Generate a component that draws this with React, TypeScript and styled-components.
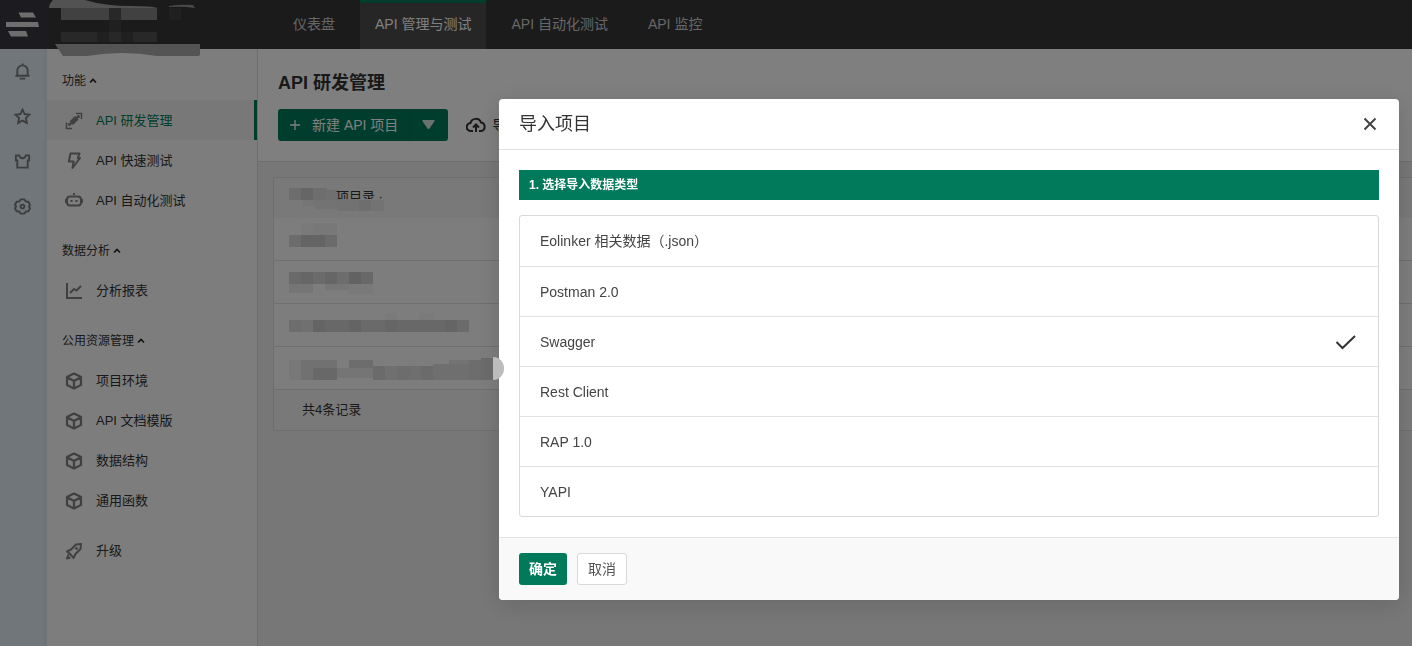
import React, { useState } from "react";
import styled, { createGlobalStyle, css } from "styled-components";

const GlobalStyle = createGlobalStyle`
  *, *::before, *::after { box-sizing: border-box; }
  body {
    margin: 0;
    background: #efefef;
    color: #333;
    font: 13px/20px "Liberation Sans", "Noto Sans CJK SC", sans-serif;
  }
  button { font: inherit; cursor: pointer; }
  a { color: inherit; text-decoration: none; }
`;

const Shell = styled.div`
  display: flex;
  flex-direction: column;
  min-height: 100vh;
  overflow: hidden;
`;

const TopBar = styled.header`
  display: flex;
  height: 49px;
  background: #363636;
`;

const LogoLink = styled.a`
  width: 47px;
  background: #38363f;
`;

const Workspace = styled.div`
  width: 231px;
`;

const Nav = styled.nav`
  display: flex;
  gap: 10px;
`;

const NavLink = styled.a<{ $active?: boolean }>`
  display: flex;
  align-items: center;
  padding: 0 15px 2px;
  border-top: 3px solid ${(p) => (p.$active ? "#007a5a" : "transparent")};
  border-bottom: 3px solid transparent;
  background: ${(p) => (p.$active ? "#4c4c4e" : "transparent")};
  color: ${(p) => (p.$active ? "#fff" : "#ccc")};
  font-size: 14px;
  white-space: nowrap;
`;

const Body = styled.div`
  display: flex;
  flex: 1;
`;

const Rail = styled.aside`
  display: flex;
  flex-direction: column;
  width: 47px;
  border-right: 3px solid #dde7ef;
  background: #e3edf5;
`;

const RailButton = styled.button`
  display: grid;
  place-items: center;
  height: 45px;
  padding: 0;
  border: 0;
  background: none;
  color: #7a7a7a;
`;

const Sidebar = styled.aside`
  width: 211px;
  padding-top: 11px;
  border-right: 1px solid #d9d9d9;
  background: #fafafa;
`;

const Group = styled.section`
  margin-bottom: 10px;
`;

const GroupButton = styled.button`
  display: flex;
  align-items: center;
  gap: 3px;
  width: 100%;
  height: 40px;
  padding: 2px 15px 0;
  border: 0;
  background: none;
  color: #333;
  font-size: 12px;
`;

const SideLink = styled.a<{ $active?: boolean }>`
  display: flex;
  align-items: center;
  gap: 10px;
  height: 40px;
  padding: 2px 12px 0 15px;
  border-right: 3px solid transparent;
  color: #333;
  ${(p) =>
    p.$active &&
    css`
      border-right-color: #007a5a;
      background: #f0f0f0;
      color: #007a5a;
    `}
`;

const SideIcon = styled.span`
  display: grid;
  place-items: center;
  width: 24px;
  color: #808080;
`;

const Main = styled.main`
  flex: 1;
  min-width: 0;
  background: #efefef;
`;

const PageHead = styled.div`
  padding: 20px;
  border-bottom: 1px solid #dedede;
  background: #fff;
`;

const PageTitle = styled.h1`
  margin: 0 0 12px;
  color: #333;
  font-size: 18px;
  line-height: 28px;
`;

const Actions = styled.div`
  display: flex;
  align-items: center;
  gap: 18px;
`;

const SplitButton = styled.div`
  display: flex;
  overflow: hidden;
  border-radius: 3px;
  background: #007a5a;
`;

const GreenButton = styled.button`
  display: flex;
  align-items: center;
  gap: 11px;
  height: 32px;
  padding: 0 11px;
  border: 0;
  background: none;
  color: #fff;
  font-size: 14px;
  white-space: nowrap;

  & + & {
    width: 39px;
    border-left: 1px solid #006e51;
  }
`;

const PlainButton = styled.button`
  display: flex;
  align-items: center;
  gap: 6px;
  padding: 0;
  border: 0;
  background: none;
  color: #333;
  font-size: 14px;
  white-space: nowrap;
`;

const TableCard = styled.div`
  margin: 15px 0 15px 15px;
  border: 1px solid #dedede;
  border-right: 0;
  border-radius: 3px 0 0 3px;
  background: #fafafa;
`;

const Table = styled.table`
  width: 100%;
  border-spacing: 0;

  th,
  td {
    padding: 0 15px;
    text-align: left;
    font-weight: 400;
    line-height: 0;
  }
  th {
    height: 40px;
    background: #f3f3f3;
  }
  tbody td {
    height: 43px;
    border-bottom: 1px solid #dedede;
  }
  tfoot td {
    height: 40px;
    padding-left: 28px;
    background: #f3f3f3;
    line-height: 20px;
  }
`;

const HeadLabel = styled.div`
  position: relative;
  height: 28px;
  padding-left: 47px;
  font-size: 13px;
  line-height: 26px;

  svg {
    position: absolute;
    left: 0;
    top: 0;
  }
`;

const TopSmudge = styled.svg`
  position: absolute;
  left: 47px;
  top: 0;
  z-index: 3;
`;

const Handle = styled.span`
  position: absolute;
  left: -6px;
  top: 258px;
  width: 11px;
  height: 23px;
  border-radius: 0 12px 12px 0;
  background: #bcbcbc;
`;

const Overlay = styled.div`
  position: fixed;
  inset: 0;
  z-index: 2;
  display: flex;
  align-items: flex-start;
  justify-content: flex-end;
  padding: 99px 13px 13px;
  background: rgba(0, 0, 0, 0.5);
`;

const Dialog = styled.form`
  position: relative;
  width: 100%;
  max-width: 900px;
  border-radius: 4px;
  background: #fff;
  box-shadow: 0 4px 24px rgba(0, 0, 0, 0.14);
`;

const DialogHead = styled.div`
  display: flex;
  align-items: center;
  justify-content: space-between;
  height: 51px;
  padding: 0 20px;
  border-bottom: 1px solid #e2e2e2;
`;

const DialogTitle = styled.h2`
  margin: 0;
  color: #333;
  font-size: 18px;
  font-weight: 400;
`;

const CloseButton = styled.button`
  display: flex;
  padding: 0;
  border: 0;
  background: none;
  color: #444;
`;

const DialogBody = styled.div`
  padding: 20px;
`;

const Step = styled.h3`
  margin: 0 0 15px;
  padding: 0 10px;
  background: #007a5a;
  color: #fff;
  font-size: 12px;
  line-height: 30px;
`;

const Options = styled.div`
  border: 1px solid #d9d9d9;
  border-radius: 3px;
`;

const Option = styled.label`
  display: flex;
  align-items: center;
  justify-content: space-between;
  height: 50px;
  padding: 0 20px;
  color: #444;
  font-size: 14px;
  cursor: pointer;

  & + & {
    border-top: 1px solid #e2e2e2;
  }
`;

const Radio = styled.input`
  appearance: none;
  width: 0;
  height: 0;
  margin: 0 auto 0 0;
`;

const DialogFoot = styled.div`
  display: flex;
  gap: 10px;
  padding: 15px 20px;
  border-top: 1px solid #e2e2e2;
  border-radius: 0 0 4px 4px;
  background: #f9f9f9;
`;

const FootButton = styled.button<{ $primary?: boolean }>`
  height: 32px;
  padding: 0 10px;
  border: ${(p) => (p.$primary ? "0" : "1px solid #d9d9d9")};
  border-radius: 3px;
  background: ${(p) => (p.$primary ? "#007a5a" : "#fff")};
  color: ${(p) => (p.$primary ? "#fff" : "#555")};
  font-size: 14px;
  font-weight: ${(p) => (p.$primary ? 700 : 400)};
`;

type IconProps = { size?: number; width?: number; children: React.ReactNode };

const Icon = ({ size = 18, width = 2, children }: IconProps) => (
  <svg
    width={size}
    height={size}
    viewBox="0 0 18 18"
    fill="none"
    stroke="currentColor"
    strokeWidth={width}
    aria-hidden="true"
  >
    {children}
  </svg>
);

const icons: Record<string, React.ReactNode> = {
  bell: <path d="M1.500 13.500h15M3.500 13.500V8a5.500 5.500 0 0 1 11 0v5.500M6 16.500h6M9 .500v2" />,
  star: <path d="m9 1.800 2.200 4.600 5.200.7-3.800 3.500 1 5.200L9 13.300l-4.600 2.500 1-5.200L1.600 7.100l5.200-.7z" />,
  shirt: <path d="M2 2.500h3.500q.5 3 3.500 3t3.500-3H16V8h-1.500v7.500h-11V8H2z" />,
  gear: (
    <>
      <path
        d="M7 1.500h4l1.500 2.200 2.700.3 1.800 3.200L15.800 9l1.200 1.800-1.800 3.200-2.700.3L11 16.500H7l-1.500-2.200-2.700-.3L1 10.800 2.200 9 1 7.200 2.800 4l2.700-.3z"
        strokeLinejoin="round"
      />
      <circle cx="9" cy="9" r="2" />
    </>
  ),
  plug: (
    <>
      <path d="m6.200 11.300 5.600-5.600" strokeWidth="5" />
      <path d="m11 6.500 3-3M7 10.500l-3 3" strokeWidth="2" />
      <path d="M11 1.500h5.500V7M14 3.800V6M1.500 10.500v6H7M4 11v2.500" strokeWidth="1.500" />
    </>
  ),
  bolt: <path d="M5.500 1.500h9L12.800 6H15l-7.500 10 1.200-6.500H3.800z" strokeLinejoin="round" />,
  robot: (
    <>
      <rect x="2" y="4.500" width="14" height="9" rx="3" />
      <path d="M9 1v2M0 7v4M18 7v4M6.500 8v2M11.500 8v2" />
    </>
  ),
  chart: <path d="M2 1v15h15M5 11l4-4 2.500 1.500L16 4" />,
  cube: <path d="m9 1.500 7 3.500v8l-7 3.500L2 13V5zM2.500 5.500 9 9l6.500-3.500M9 9v7" strokeWidth="2.200" strokeLinejoin="round" />,
  rocket: (
    <>
      <path
        d="M16 2 11 2.500 6 7.500 2 9.500l2.500 2 2 2L8.500 16l2-4L15.500 7zM3.500 12.500l-1.500 4 3.500-1"
        strokeLinejoin="round"
      />
      <circle cx="11.500" cy="6.500" r="1" fill="currentColor" strokeWidth="1" />
    </>
  ),
};

const Caret = () => (
  <svg width="8" height="6" viewBox="0 0 8 6" fill="none" stroke="#222" strokeWidth="1.600" aria-hidden="true">
    <path d="m1 4.500 3-3 3 3" />
  </svg>
);

const groups = [
  {
    name: "功能",
    items: [
      ["API 研发管理", "plug"],
      ["API 快速测试", "bolt"],
      ["API 自动化测试", "robot"],
    ],
  },
  { name: "数据分析", items: [["分析报表", "chart"]] },
  {
    name: "公用资源管理",
    items: [
      ["项目环境", "cube"],
      ["API 文档模版", "cube"],
      ["数据结构", "cube"],
      ["通用函数", "cube"],
    ],
  },
];

// Each block is x, y, width, height, darkness.
type Block = [number, number, number, number, number];

const headBlocks: Block[] = [
  [0, 4, 12, 12, 0.1], [12, 4, 12, 12, 0.16], [24, 4, 14, 12, 0.09], [38, 6, 12, 10, 0.07],
  [14, 16, 12, 6, 0.03], [26, 16, 22, 9, 0.05], [48, 15, 22, 12, 0.06], [70, 16, 12, 11, 0.09], [82, 16, 13, 11, 0.05],
];

const rowBlocks: Block[][] = [
  [[12, -2, 12, 12, 0.02], [24, -2, 24, 12, 0.04], [0, 10, 12, 12, 0.13], [12, 10, 24, 12, 0.2], [36, 10, 12, 12, 0.14]],
  [
    [0, 4, 12, 12, 0.15], [12, 4, 12, 12, 0.18], [24, 4, 12, 12, 0.14], [36, 4, 12, 12, 0.18], [48, 4, 12, 12, 0.12],
    [60, 4, 12, 12, 0.21], [72, 4, 12, 12, 0.17], [0, 16, 24, 9, 0.06], [36, 16, 24, 6, 0.05], [60, 16, 24, 10, 0.03],
  ],
  [
    [0, 9, 12, 12, 0.12], [12, 9, 12, 12, 0.1], [24, 9, 12, 12, 0.2], [36, 9, 24, 12, 0.16], [60, 9, 12, 12, 0.2],
    [72, 9, 24, 12, 0.15], [96, 9, 12, 12, 0.18], [108, 9, 48, 12, 0.16], [156, 9, 12, 12, 0.19], [168, 9, 12, 12, 0.14],
    [96, 2, 12, 7, 0.02], [130, 2, 14, 7, 0.02],
  ],
  [
    [0, 6, 12, 20, 0.04], [12, 6, 12, 20, 0.09], [24, 6, 24, 8, 0.09], [24, 14, 24, 12, 0.16], [60, 6, 24, 8, 0.12],
    [48, 14, 36, 10, 0.06], [84, 12, 12, 14, 0.14], [96, 12, 12, 14, 0.1], [108, 12, 12, 14, 0.12], [120, 12, 12, 14, 0.11],
    [132, 12, 12, 14, 0.14], [144, 10, 36, 16, 0.11], [160, 6, 20, 4, 0.08], [180, 6, 12, 20, 0.12], [192, 4, 12, 22, 0.13],
  ],
];

const Mosaic = ({ blocks }: { blocks: Block[] }) => (
  <svg
    width="210"
    height="28"
    viewBox="0 0 210 28"
    overflow="visible"
    shapeRendering="crispEdges"
    aria-hidden="true"
  >
    {blocks.map(([x, y, w, h, a], i) => (
      <rect key={i} x={x} y={y} width={w} height={h} fill="#000" fillOpacity={a} />
    ))}
  </svg>
);

const types = ["Eolinker 相关数据（.json）", "Postman 2.0", "Swagger", "Rest Client", "RAP 1.0", "YAPI"];

export default function App() {
  const [type, setType] = useState("Swagger");

  return (
    <>
      <GlobalStyle />
      <Shell>
        <TopBar>
          <LogoLink href="#" aria-label="Eolinker">
            <svg width="47" height="49" viewBox="0 0 47 49" fill="#dcdcdf" aria-hidden="true">
              <path d="M18.500 12.500H33l3 5H21zM6 22h32l1 5H6zM8 31h18l2 5.500H11z" />
            </svg>
          </LogoLink>
          <Workspace />
          <Nav>
            <NavLink href="#">仪表盘</NavLink>
            <NavLink href="#" $active>API 管理与测试</NavLink>
            <NavLink href="#">API 自动化测试</NavLink>
            <NavLink href="#">API 监控</NavLink>
          </Nav>
        </TopBar>
        <Body>
          <Rail>
            {[["bell", "通知"], ["star", "收藏"], ["shirt", "皮肤"], ["gear", "设置"]].map(([icon, label]) => (
              <RailButton key={icon} aria-label={label}>
                <Icon size={17}>{icons[icon]}</Icon>
              </RailButton>
            ))}
          </Rail>
          <Sidebar>
            {groups.map((group) => (
              <Group key={group.name}>
                <GroupButton>
                  {group.name}
                  <Caret />
                </GroupButton>
                {group.items.map(([label, icon]) => (
                  <SideLink key={label} href="#" $active={label === "API 研发管理"}>
                    <SideIcon>
                      <Icon>{icons[icon]}</Icon>
                    </SideIcon>
                    {label}
                  </SideLink>
                ))}
              </Group>
            ))}
            <SideLink href="#">
              <SideIcon>
                <Icon>{icons.rocket}</Icon>
              </SideIcon>
              升级
            </SideLink>
          </Sidebar>
          <Main>
            <PageHead>
              <PageTitle>API 研发管理</PageTitle>
              <Actions>
                <SplitButton>
                  <GreenButton>
                    <svg width="12" height="12" viewBox="0 0 12 12" stroke="#fff" strokeWidth="1.300" aria-hidden="true">
                      <path d="M6 1v10M1 6h10" />
                    </svg>
                    新建 API 项目
                  </GreenButton>
                  <GreenButton aria-label="更多">
                    <svg width="14" height="10" viewBox="0 0 14 10" fill="#d5e5e0" aria-hidden="true">
                      <path d="M2 0h11q1.200 0 .6 1L8.500 8.500q-1 1-2 0L1.400 1Q.8 0 2 0z" />
                    </svg>
                  </GreenButton>
                </SplitButton>
                <PlainButton>
                  <svg width="20" height="16" viewBox="0 0 20 16" fill="none" stroke="#333" strokeWidth="2" aria-hidden="true">
                    <path d="M7 14H5a4 4 0 0 1-.5-8A5.500 5.500 0 0 1 15 5.500 4.300 4.300 0 0 1 15 14h-2M10 15V8M7 10.500l3-3 3 3" />
                  </svg>
                  导入
                </PlainButton>
              </Actions>
            </PageHead>
            <TableCard>
              <Table>
                <thead>
                  <tr>
                    <th scope="col">
                      <HeadLabel>
                        项目录 ·
                        <svg width="100" height="28" viewBox="0 0 100 28" aria-hidden="true">
                          <path d="M40 14q8 1 12 1h48v13H40z" fill="#f3f3f3" />
                        </svg>
                        <Mosaic blocks={headBlocks} />
                      </HeadLabel>
                    </th>
                  </tr>
                </thead>
                <tbody>
                  {rowBlocks.map((blocks, i) => (
                    <tr key={i}>
                      <td>
                        <Mosaic blocks={blocks} />
                      </td>
                    </tr>
                  ))}
                </tbody>
                <tfoot>
                  <tr>
                    <td>共4条记录</td>
                  </tr>
                </tfoot>
              </Table>
            </TableCard>
          </Main>
        </Body>
      </Shell>
      <TopSmudge width="160" height="58" viewBox="0 0 160 58" aria-hidden="true">
        <path d="M6 0h32q20 6 46 6 22 0 26 2H2q0-4 4-8z" fill="#525252" />
        <path d="M122 6q12-2 24-1l2 3q-12-2-26-1z" fill="#4a4a4a" />
        <path d="M14 8h48v12H14zM74 8h36v12H74z" fill="#414141" />
        <path d="M62 8h12v12H62zM14 32h36v10H14zM62 32h12v10H62zM86 32h24v10H86z" fill="#282828" />
        <path d="M50 32h12v10H50zM74 32h12v10H74zM62 20h12v12H62zM122 8h12v12h-12z" fill="#202020" />
        <path d="M8 44h145v10q0 2-3 2h-40q-35-6-70 0h-24q-4-6-8-12z" fill="#545454" />
      </TopSmudge>
      <Overlay>
        <Dialog role="dialog" aria-labelledby="import-title" onSubmit={(e) => e.preventDefault()}>
          <DialogHead>
            <DialogTitle id="import-title">导入项目</DialogTitle>
            <CloseButton type="button" aria-label="关闭">
              <Icon width={2}>
                <path d="m3.500 3.500 11 11m0-11-11 11" />
              </Icon>
            </CloseButton>
          </DialogHead>
          <DialogBody>
            <Step>1. 选择导入数据类型</Step>
            <Options role="radiogroup">
              {types.map((name) => (
                <Option key={name}>
                  {name}
                  <Radio type="radio" name="type" checked={type === name} onChange={() => setType(name)} />
                  {type === name && (
                    <svg width="24" height="18" viewBox="0 0 24 18" fill="none" stroke="#333" strokeWidth="2" aria-hidden="true">
                      <path d="m2.500 9 6 6L21 3" />
                    </svg>
                  )}
                </Option>
              ))}
            </Options>
          </DialogBody>
          <DialogFoot>
            <FootButton type="submit" $primary>确定</FootButton>
            <FootButton type="button">取消</FootButton>
          </DialogFoot>
          <Handle />
        </Dialog>
      </Overlay>
    </>
  );
}
